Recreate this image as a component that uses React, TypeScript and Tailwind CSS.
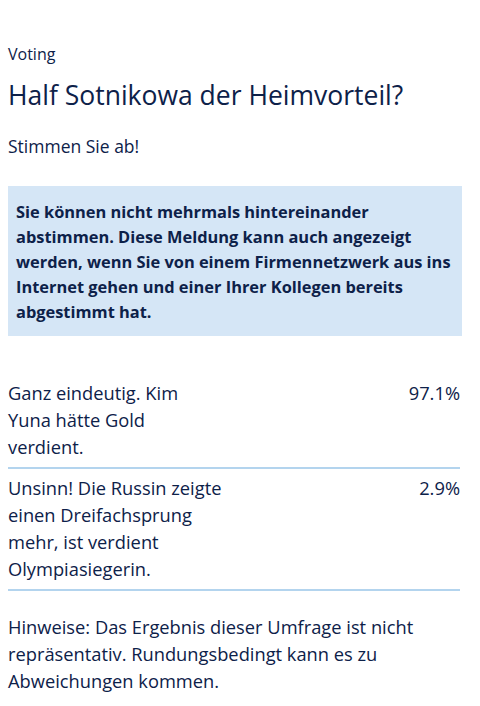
const options = [
  { label: "Ganz eindeutig. Kim Yuna hätte Gold verdient.", value: "97.1%" },
  {
    label: "Unsinn! Die Russin zeigte einen Dreifachsprung mehr, ist verdient Olympiasiegerin.",
    value: "2.9%",
  },
];

export default function App() {
  return (
    <div
      className="bg-white text-[#0d2149] px-2 pt-[42px] pb-6 w-[470px]"
      style={{ fontFamily: "'Open Sans', 'Noto Sans', sans-serif" }}
    >
      <p className="text-[16px] leading-[24px]">Voting</p>

      <h1 className="mt-[12px] text-[26.5px] leading-[34px]">
        Half Sotnikowa der Heimvorteil?
      </h1>

      <p className="mt-[22px] text-[17.5px] leading-[24px]">Stimmen Sie ab!</p>

      {/* Hinweis-Box */}
      <div className="mt-[28px] w-[454px] bg-[#d5e6f6] pl-2 pr-0 pt-[13px] pb-[12px]">
        <p className="font-bold text-[16.4px] leading-[25px]">
          Sie können nicht mehrmals hintereinander abstimmen. Diese Meldung kann auch
          angezeigt werden, wenn Sie von einem Firmennetzwerk aus ins Internet gehen
          und einer Ihrer Kollegen bereits abgestimmt hat.
        </p>
      </div>

      {/* Ergebnisse */}
      <div className="mt-[38px] w-[452px]">
        {options.map((o) => (
          <div key={o.value} className="flex justify-between border-b-2 border-[#b3d4ee] pt-[5px] pb-[7px]">
            <p className="w-[216px] text-[18.3px] leading-[27px]">{o.label}</p>
            <span className="text-[18.3px] leading-[27px]">{o.value}</span>
          </div>
        ))}
      </div>

      <p className="mt-[22px] w-[454px] text-[18.3px] leading-[27px]">
        Hinweise: Das Ergebnis dieser Umfrage ist nicht repräsentativ. Rundungsbedingt
        kann es zu Abweichungen kommen.
      </p>
    </div>
  );
}
